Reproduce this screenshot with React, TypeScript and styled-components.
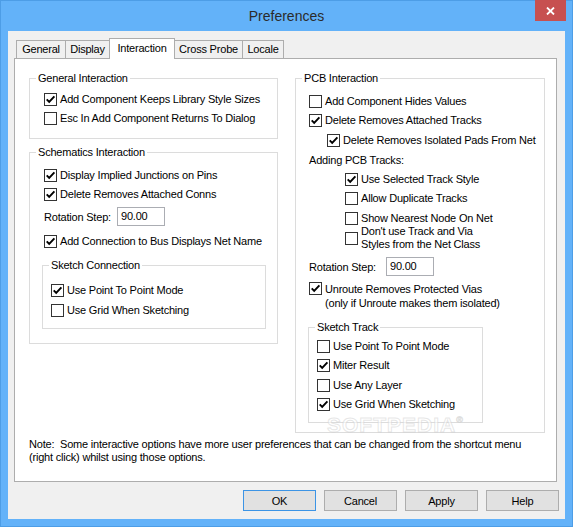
import React from 'react';
import styled, { createGlobalStyle } from 'styled-components';

const GlobalStyle = createGlobalStyle`
  html, body {
    margin: 0;
    padding: 0;
    background: #63b2f9;
  }
  body {
    font-family: 'Liberation Sans', Arial, sans-serif;
    font-size: 11px;
    color: #000;
  }
  * {
    box-sizing: border-box;
  }
`;

const tabs: [string, number][] = [
  ['General', 50],
  ['Display', 45],
  ['Interaction', 66],
  ['Cross Probe', 69],
  ['Locale', 42],
];

const Check = ({ on }: { on?: boolean }) => (
  <Box>
    {on && (
      <svg width="11" height="11" viewBox="0 0 11 11">
        <path d="M1.7 5.3 L4.2 7.9 L9.4 2.3" fill="none" stroke="#000" strokeWidth="1.9" />
      </svg>
    )}
  </Box>
);

type OptionProps = {
  checked?: boolean;
  children: React.ReactNode;
  indent?: number;
  mt?: number;
  top?: boolean;
  lh?: number;
};

const Option = ({ checked, children, indent = 0, mt = 0, top, lh = 13 }: OptionProps) => (
  <OptionRow $indent={indent} $mt={mt} $top={top}>
    <Check on={checked} />
    <OptionText $lh={lh}>{children}</OptionText>
  </OptionRow>
);

const Rotation = ({ labelWidth, mt = 0 }: { labelWidth: number; mt?: number }) => (
  <FieldRow $mt={mt}>
    <FieldLabel $w={labelWidth}>Rotation Step:</FieldLabel>
    <NumberField>90.00</NumberField>
  </FieldRow>
);

export default function App() {
  return (
    <>
      <GlobalStyle />
      <Window>
        <TitleBar>
          <span />
          <Title>Preferences</Title>
          <CloseButton>
            <svg width="9" height="8" viewBox="0 0 9 8">
              <path d="M1 0.5 L8 7.5 M8 0.5 L1 7.5" stroke="#fff" strokeWidth="1.8" />
            </svg>
          </CloseButton>
        </TitleBar>

        <Client>
          <TabStrip>
            {tabs.map(([name, w]) => (
              <Tab key={name} $w={w} $active={name === 'Interaction'}>
                {name}
              </Tab>
            ))}
          </TabStrip>

          <Panel>
            <Columns>
              <Column>
                <GroupBox>
                  <GroupTitle>General Interaction</GroupTitle>
                  <GroupBody $pad="8px 0 13px 14px">
                    <Option checked>Add Component Keeps Library Style Sizes</Option>
                    <Option>Esc In Add Component Returns To Dialog</Option>
                  </GroupBody>
                </GroupBox>

                <GroupBox>
                  <GroupTitle>Schematics Interaction</GroupTitle>
                  <GroupBody $pad="10px 0 14px 14px">
                    <Option checked>Display Implied Junctions on Pins</Option>
                    <Option checked>Delete Removes Attached Conns</Option>
                    <Rotation labelWidth={73} />
                    <Option checked mt={3}>
                      Add Connection to Bus Displays Net Name
                    </Option>
                    <GroupBox $w={224} $ml={-2} $mt={11}>
                      <GroupTitle>Sketch Connection</GroupTitle>
                      <GroupBody $pad="12px 0 11px 8px" $gap={7}>
                        <Option checked>Use Point To Point Mode</Option>
                        <Option>Use Grid When Sketching</Option>
                      </GroupBody>
                    </GroupBox>
                  </GroupBody>
                </GroupBox>
              </Column>

              <Column>
                <GroupBox>
                  <GroupTitle>PCB Interaction</GroupTitle>
                  <GroupBody $pad="10px 0 9px 13px">
                    <Option>Add Component Hides Values</Option>
                    <Option checked>Delete Removes Attached Tracks</Option>
                    <Option checked indent={18} mt={1}>
                      Delete Removes Isolated Pads From Net
                    </Option>
                    <PlainLine $mt={1}>Adding PCB Tracks:</PlainLine>
                    <Option checked indent={36}>
                      Use Selected Track Style
                    </Option>
                    <Option indent={36}>Allow Duplicate Tracks</Option>
                    <Option indent={36} mt={1}>
                      Show Nearest Node On Net
                    </Option>
                    <Option indent={36} mt={-6}>
                      Don't use Track and Via
                      <br />
                      Styles from the Net Class
                    </Option>
                    <Rotation labelWidth={77} />
                    <Option checked top lh={14}>
                      Unroute Removes Protected Vias
                      <br />
                      (only if Unroute makes them isolated)
                    </Option>
                    <GroupBox $w={175} $ml={-1} $mt={11}>
                      <GroupTitle>Sketch Track</GroupTitle>
                      <GroupBody $pad="6px 0 11px 8px">
                        <Option>Use Point To Point Mode</Option>
                        <Option checked>Miter Result</Option>
                        <Option mt={1}>Use Any Layer</Option>
                        <Option checked>Use Grid When Sketching</Option>
                      </GroupBody>
                    </GroupBox>
                  </GroupBody>
                </GroupBox>
              </Column>
            </Columns>

            <Note>
              {'Note:  Some interactive options have more user preferences that can be changed from the shortcut menu\n(right click) whilst using those options.'}
            </Note>

            <Watermark>
              SOFTPEDIA<sup>®</sup>
            </Watermark>
          </Panel>

          <ButtonRow>
            <Button $primary>OK</Button>
            <Button>Cancel</Button>
            <Button>Apply</Button>
            <Button>Help</Button>
          </ButtonRow>
        </Client>
      </Window>
    </>
  );
}

const Window = styled.div`
  width: 573px;
  height: 527px;
  background: #63b2f9;
  border: 1px solid #4d9de6;
  padding: 0 7px 7px 7px;
  display: flex;
  flex-direction: column;
`;

const TitleBar = styled.div`
  height: 30px;
  flex: none;
  display: grid;
  grid-template-columns: 1fr auto 1fr;
  align-items: start;
`;

const Title = styled.div`
  line-height: 30px;
  font-size: 14px;
  color: #2b2b2b;
`;

const CloseButton = styled.div`
  justify-self: end;
  width: 31px;
  height: 21px;
  margin: -1px -1px 0 0;
  background: #c75050;
  display: flex;
  align-items: center;
  justify-content: center;
`;

const Client = styled.div`
  flex: 1;
  background: #f0f0f0;
  padding: 7px 8px 0 6px;
  display: flex;
  flex-direction: column;
`;

const TabStrip = styled.div`
  display: flex;
  align-items: flex-end;
  height: 21px;
  margin: 0 0 -1px 2px;
  position: relative;
  z-index: 2;
`;

const Tab = styled.div<{ $w: number; $active?: boolean }>`
  width: ${(p) => p.$w}px;
  height: ${(p) => (p.$active ? 21 : 18)}px;
  margin-bottom: ${(p) => (p.$active ? 0 : 1)}px;
  border: 1px solid #adadad;
  border-bottom: none;
  background: ${(p) => (p.$active ? '#fff' : '#f0f0f0')};
  line-height: ${(p) => (p.$active ? 19 : 17)}px;
  text-align: center;
  letter-spacing: -0.2px;
  white-space: nowrap;

  & + & {
    margin-left: -1px;
  }
`;

const Panel = styled.div`
  position: relative;
  width: 543px;
  height: 424px;
  background: #fff;
  border: 1px solid #adadad;
  padding: 19px 0 0 14px;
`;

const Columns = styled.div`
  display: grid;
  grid-template-columns: 249px 250px;
  column-gap: 17px;
  align-items: start;
`;

const Column = styled.div`
  display: flex;
  flex-direction: column;
  gap: 13px;
`;

const GroupBox = styled.div<{ $w?: number; $ml?: number; $mt?: number }>`
  border: 1px solid #dcdcdc;
  display: flex;
  flex-direction: column;
  width: ${(p) => (p.$w ? `${p.$w}px` : 'auto')};
  margin-left: ${(p) => p.$ml ?? 0}px;
  margin-top: ${(p) => p.$mt ?? 0}px;
`;

const GroupTitle = styled.div`
  align-self: flex-start;
  margin: -7px 0 0 6px;
  padding: 0 2px;
  background: #fff;
  line-height: 13px;
  letter-spacing: -0.2px;
  white-space: nowrap;
`;

const GroupBody = styled.div<{ $pad: string; $gap?: number }>`
  display: flex;
  flex-direction: column;
  gap: ${(p) => p.$gap ?? 6}px;
  padding: ${(p) => p.$pad};
`;

const OptionRow = styled.div<{ $indent: number; $mt: number; $top?: boolean }>`
  display: flex;
  align-items: ${(p) => (p.$top ? 'flex-start' : 'center')};
  gap: 3px;
  min-height: 13px;
  margin-left: ${(p) => p.$indent}px;
  margin-top: ${(p) => p.$mt}px;
`;

const Box = styled.span`
  flex: none;
  width: 13px;
  height: 13px;
  border: 1px solid #333;
  background: #fff;
  display: flex;
  align-items: center;
  justify-content: center;
`;

const OptionText = styled.span<{ $lh: number }>`
  line-height: ${(p) => p.$lh}px;
  letter-spacing: -0.2px;
  white-space: nowrap;
`;

const PlainLine = styled.div<{ $mt?: number }>`
  line-height: 13px;
  letter-spacing: -0.2px;
  margin-top: ${(p) => p.$mt ?? 0}px;
`;

const FieldRow = styled.div<{ $mt: number }>`
  display: flex;
  align-items: center;
  height: 19px;
  margin-top: ${(p) => p.$mt}px;
`;

const FieldLabel = styled.span<{ $w: number }>`
  width: ${(p) => p.$w}px;
  letter-spacing: -0.2px;
  white-space: nowrap;
`;

const NumberField = styled.div`
  width: 48px;
  height: 19px;
  border: 1px solid #abadb3;
  background: #fff;
  padding-left: 3px;
  line-height: 17px;
  letter-spacing: -0.2px;
`;

const Note = styled.div`
  margin-top: 5px;
  line-height: 13px;
  letter-spacing: -0.2px;
  white-space: pre;
`;

const Watermark = styled.div`
  position: absolute;
  left: 312px;
  top: 357px;
  font-size: 21px;
  line-height: 18px;
  font-weight: bold;
  letter-spacing: 1px;
  color: rgba(255, 255, 255, 0.6);
  -webkit-text-stroke: 1px rgba(200, 200, 200, 0.45);
  pointer-events: none;

  sup {
    font-size: 9px;
    line-height: 9px;
    vertical-align: top;
    -webkit-text-stroke: 0.6px rgba(200, 200, 200, 0.6);
  }
`;

const ButtonRow = styled.div`
  display: flex;
  justify-content: flex-end;
  gap: 8px;
  margin: 8px -2px 0 0;
`;

const Button = styled.div<{ $primary?: boolean }>`
  width: 73px;
  height: 21px;
  border: 1px solid ${(p) => (p.$primary ? '#3c94e5' : '#adadad')};
  background: #e1e1e1;
  display: flex;
  align-items: center;
  justify-content: center;
  letter-spacing: -0.2px;
`;
